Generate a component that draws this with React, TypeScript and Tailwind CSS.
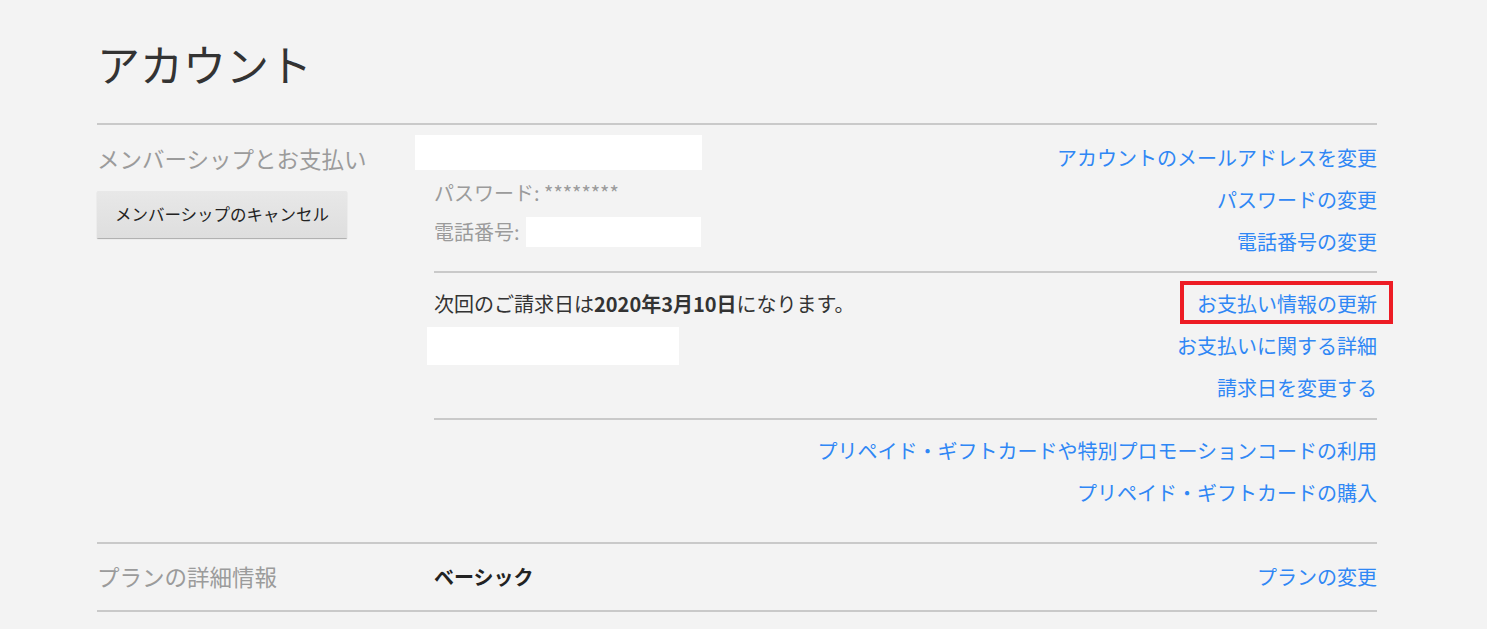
import React from "react";

const FONT = { fontFamily: '"Noto Sans CJK JP", "Noto Sans", sans-serif' };

function LinkRow({ children, boxed }: { children: React.ReactNode; boxed?: boolean }) {
  return (
    <div className="h-[42px] flex items-center justify-end">
      <div className="relative h-[42px] flex items-center">
        <a className="text-[20px] leading-[42px] text-[#2f87f5] whitespace-nowrap cursor-pointer">{children}</a>
        {boxed && (
          <div className="absolute left-[-17px] right-[-16px] top-[-2px] bottom-[1px] border-[4px] border-[#ed1c24] pointer-events-none" />
        )}
      </div>
    </div>
  );
}

export default function App() {
  return (
    <div className="min-h-[629px] w-full bg-[#f3f3f3] text-[#333333]" style={FONT}>
      <div className="ml-[97px] w-[1280px]">
        <div className="h-[123px] pt-[33px]">
          <h1 className="text-[43px] leading-[60px] font-normal text-[#333333]">アカウント</h1>
        </div>

        {/* Membership section */}
        <div className="border-t-2 border-[#c9c9c9] flex">
          <div className="w-[337px] shrink-0 pt-[12px]">
            <div className="text-[22.5px] leading-[42px] text-[#9b9b9b] whitespace-nowrap">メンバーシップとお支払い</div>
            <button className="mt-[12px] w-[250px] h-[47px] bg-gradient-to-b from-[#e8e8e8] to-[#dedede] shadow-[0_1px_1px_rgba(0,0,0,0.3)] text-[16.5px] text-[#222222] rounded-[1px]">
              メンバーシップのキャンセル
            </button>
          </div>

          <div className="flex-1">
            {/* block 1 */}
            <div className="flex justify-between pt-[10px] pb-[8px]">
              <div className="flex flex-col">
                <div className="-ml-[19px] w-[287px] h-[35px] bg-white" />
                <div className="mt-[3px] h-[40px] leading-[40px] text-[20px] text-[#9b9b9b] whitespace-nowrap">パスワード: ********</div>
                <div className="h-[38px] flex items-center text-[20px] text-[#9b9b9b] whitespace-nowrap">
                  <span>電話番号:</span>
                  <span className="ml-[6px] w-[175px] h-[30px] bg-white" />
                </div>
              </div>
              <div className="flex flex-col pt-[2px]">
                <LinkRow>アカウントのメールアドレスを変更</LinkRow>
                <LinkRow>パスワードの変更</LinkRow>
                <LinkRow>電話番号の変更</LinkRow>
              </div>
            </div>

            {/* block 2 */}
            <div className="border-t-2 border-[#c9c9c9] flex justify-between pt-[10px] pb-[9px]">
              <div className="flex flex-col">
                <div className="h-[42px] leading-[42px] text-[20px] text-[#333333] whitespace-nowrap">
                  次回のご請求日は<span className="font-bold">2020年3月10日</span>になります。
                </div>
                <div className="-ml-[7px] mt-[2px] w-[252px] h-[38px] bg-white" />
              </div>
              <div className="flex flex-col">
                <LinkRow boxed>お支払い情報の更新</LinkRow>
                <LinkRow>お支払いに関する詳細</LinkRow>
                <LinkRow>請求日を変更する</LinkRow>
              </div>
            </div>

            {/* block 3 */}
            <div className="border-t-2 border-[#c9c9c9] flex flex-col pt-[10px] pb-[28px]">
              <LinkRow>プリペイド・ギフトカードや特別プロモーションコードの利用</LinkRow>
              <LinkRow>プリペイド・ギフトカードの購入</LinkRow>
            </div>
          </div>
        </div>

        {/* Plan section */}
        <div className="border-t-2 border-b-2 border-[#c9c9c9] h-[70px] flex items-center pb-[1px]">
          <div className="w-[337px] shrink-0 text-[22.5px] text-[#9b9b9b] whitespace-nowrap">プランの詳細情報</div>
          <div className="flex-1 flex items-center justify-between">
            <div className="text-[20px] font-bold text-[#222222]">ベーシック</div>
            <a className="text-[20px] text-[#2f87f5] cursor-pointer">プランの変更</a>
          </div>
        </div>
      </div>
    </div>
  );
}
